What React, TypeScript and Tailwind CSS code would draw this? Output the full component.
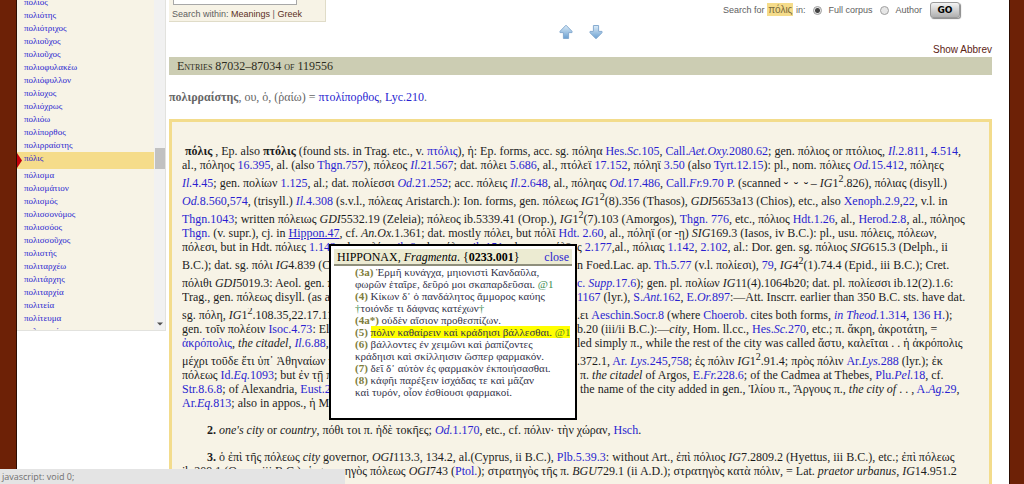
import React from "react";

const before = [
  "πόλιος", "πολιότης", "πολιότριχος", "πολιοῦχος", "πολιοῦχος", "πολιοφυλακέω",
  "πολιόφυλλον", "πολίοχος", "πολιόχρως", "πολιόω", "πολίπορθος", "πολιρραίστης",
];
const after = [
  "πόλισμα", "πολισμάτιον", "πολισμός", "πολισσονόμος", "πολισσόος", "πολισσοῦχος",
  "πολιστής", "πολιταρχέω", "πολιτάρχης", "πολιταρχία", "πολιτεία", "πολίτευμα", "πολιτευτέον",
];

/* Inline marks: [link] _italic_ #bold# ^superscript */
function rich(text: string): React.ReactNode[] {
  return text.split(/(\[[^\]]+\]|_[^_]+_|#[^#]+#|\^\d)/).map((part, i) => {
    if (/^\[/.test(part)) {
      const inner = part.slice(1, -1);
      return (
        <a key={i} href="#cite" className={inner === "Hippon.47" ? "text-[#2a1fd0] underline" : "text-[#2a1fd0]"}>
          {rich(inner)}
        </a>
      );
    }
    if (/^_./.test(part)) return <i key={i}>{part.slice(1, -1)}</i>;
    if (/^#./.test(part)) return <b key={i}>{part.slice(1, -1)}</b>;
    if (/^\^/.test(part)) return <sup key={i} className="text-[10px]">{part.slice(1)}</sup>;
    return part;
  });
}

type LineData = { t: string; rest?: string; tall?: boolean };

const lines: LineData[] = [
  { t: " #πόλις# , Ep. also #πτόλις# (found sts. in Trag. etc., v. [πτόλις]), ἡ: Ep. forms, acc. sg. πόληα [Hes._Sc._105], [Call._Aet.Oxy._2080.62]; gen. πόλιος or πτόλιος, [_Il._2.811], [4.514]," },
  { t: "al., πόληος [16.395], al. (also [Thgn.757]), πόλεος [_Il._21.567]; dat. πόλει [5.686], al., πτόλεϊ [17.152], πόληϊ [3.50] (also [Tyrt.12.15]): pl., nom. πόλιες [_Od._15.412], πόληες" },
  { t: "[_Il._4.45]; gen. πολίων [1.125], al.; dat. πολίεσσι [_Od._21.252]; acc. πόλεις [_Il._2.648], al., πόληας [_Od._17.486], [Call._Fr._9.70 P.] (scanned ⏑  ⏑  ⏑ – _IG_1^2.826), πόλιας (disyll.)", tall: true },
  { t: "[_Od._8.560],[574], (trisyll.) [_Il._4.308] (s.v.l., πόλεας Aristarch.): Ion. forms, gen. πόλεως _IG_1^2(8).356 (Thasos), _GDI_5653a13 (Chios), etc., also [Xenoph.2.9],[22], v.l. in", tall: true },
  { t: "[Thgn.1043]; written πόλειως _GDI_5532.19 (Zeleia); πόλεος ib.5339.41 (Orop.), _IG_1^2(7).103 (Amorgos), [Thgn. 776], etc., πόλιος [Hdt.1.26], al., [Herod.2.8], al., πόληος", tall: true },
  { t: "[Thgn.] (v. supr.), cj. in [Hippon.47], cf. _An.Ox._1.361; dat. mostly πόλει, but πόλῑ [Hdt. 2.60], al., πόληϊ (or -ῃ) _SIG_169.3 (Iasos, iv B.C.): pl., usu. πόλεις, πόλεων," },
  { t: "πόλεσι, but in Hdt. πόλιες [1.142], al., πολίων [ib.6], al., πόλισι [ib.151], al., acc. πόλῑ", rest: "ς [2.177],al., πόλιας [1.142], [2.102], al.: Dor. gen. sg. πόλιος _SIG_615.3 (Delph., ii" },
  { t: "B.C.); dat. sg. πόλι _IG_4.839 (Calauria); dat. pl. πολίεσι", rest: "n Foed.Lac. ap. [Th.5.77] (v.l. πολίεσι), [79], _IG_4^2(1).74.4 (Epid., iii B.C.); Cret.", tall: true },
  { t: "πόλιθι _GDI_5019.3: Aeol. gen. πόλιος", rest: "[c. _Supp._17.6]); gen. pl. πολίων _IG_11(4).1064b20; dat. pl. πολίεσσι ib.12(2).1.6:", tall: true },
  { t: "Trag., gen. πόλεως disyll. (as always in Com.)", rest: "[1167] (lyr.), [S._Ant._162], [E._Or._897]:—Att. Inscrr. earlier than 350 B.C. sts. have dat." },
  { t: "sg. πόλη, _IG_1^2.108.35,22.17.11, al.", rest: ".ει [Aeschin.Socr.8] (where [Choerob.] cites both forms, [_in Theod._1.314], [136 H.]);", tall: true },
  { t: "gen. τοῖν πολέοιν [Isoc.4.73]: Elean πόλερ", rest: "b.20 (iii/ii B.C.):—_city_, Hom. ll.cc., [Hes._Sc._270], etc.; π. ἄκρη, ἀκροτάτη, =" },
  { t: "[ἀκρόπολις], _the citadel_, [_Il._6.88], al.: at Athens", rest: "led simply π., while the rest of the city was called ἄστυ, καλεῖται . . ἡ ἀκρόπολις" },
  { t: "μέχρι τοῦδε ἔτι ὑπ᾽ Ἀθηναίων πόλις", rest: ".372.1, [Ar. _Lys._245],[758]; ἐς πόλιν _IG_1^2.91.4; πρὸς πόλιν [Ar._Lys._288] (lyr.); ἐκ", tall: true },
  { t: "πόλεως [Id._Eq._1093]; but ἐν τῇ πόλει", rest: " π. _the citadel_ of Argos, [E._Fr._228.6]; of the Cadmea at Thebes, [Plu._Pel._18], cf." },
  { t: "[Str.8.6.8]; of Alexandria, [Eust.239]", rest: " the name of the city added in gen., Ἰλίου π., Ἄργους π., _the city of_ . . , [A._Ag._29]," },
  { t: "[Ar._Eq._813]; also in appos., ἡ Μένδη πόλις" },
];

function Line({ t, rest, tall }: LineData) {
  return (
    <div className={tall ? "flex pt-1" : "flex"}>
      <span className={rest ? "w-[395px] shrink-0 overflow-hidden whitespace-pre" : "whitespace-pre"}>{rich(t)}</span>
      {rest && <span className="whitespace-pre">{rich(rest)}</span>}
    </div>
  );
}

const Num = ({ children }: { children: string }) => <b className="text-[#7d7d3c]">{children}</b>;

function Popup() {
  return (
    <div role="dialog" aria-label="Hipponax" className="absolute left-[329px] top-[244px] h-[176px] w-[248px] border-2 border-black bg-white p-[3px] text-[#33334a]">
      <div className="flex h-[17px] items-center justify-between border-b-2 border-[#8f8f7c] bg-[#ecebd2] px-[3px] text-[12px] text-black">
        <span className="whitespace-pre">HIPPONAX, <i>Fragmenta</i>. {"{"}<b>0233.001</b>{"}"}</span>
        <a href="#close" className="text-[#2a1fd0]">close</a>
      </div>
      <div className="whitespace-nowrap pl-[21px] text-[11px] leading-[12px]">
        <p><Num>(3a)</Num> Ἑρμῆ κυνάγχα, μηιονιστὶ Κανδαῦλα,</p>
        <p>φωρῶν ἑταῖρε, δεῦρό μοι σκαπαρδεῦσαι. <span className="text-[#3c8a50]">@1</span></p>
        <p><Num>(4)</Num> Κίκων δ᾽ ὁ πανδάλητος ἄμμορος καύης</p>
        <p><span className="text-[#3c8a50]">†</span>τοιόνδε τι δάφνας κατέχων<span className="text-[#3c8a50]">†</span></p>
        <p><Num>(4a*)</Num> οὐδὲν αἴσιον προθεσπίζων.</p>
        <p><Num>(5)</Num> <span className="bg-[#ffff00]">πόλιν καθαίρειν καὶ κράδηισι βάλλεσθαι. <span className="text-[#5c8a20]">@1</span></span></p>
        <p><Num>(6)</Num> βάλλοντες ἐν χειμῶνι καὶ ῥαπίζοντες</p>
        <p>κράδηισι καὶ σκίλληισιν ὥσπερ φαρμακόν.</p>
        <p><Num>(7)</Num> δεῖ δ᾽ αὐτὸν ἐς φαρμακὸν ἐκποιήσασθαι.</p>
        <p><Num>(8)</Num> κἀφῆι παρέξειν ἰσχάδας τε καὶ μᾶζαν</p>
        <p>καὶ τυρόν, οἷον ἐσθίουσι φαρμακοί.</p>
      </div>
    </div>
  );
}

function Arrow({ down }: { down?: boolean }) {
  return (
    <a href={down ? "#next" : "#previous"} aria-label={down ? "Next entries" : "Previous entries"}>
      <svg width="14" height="16" viewBox="0 0 14 16">
        <defs>
          <linearGradient id={down ? "gd" : "gu"} x1="0" y1="0" x2="0" y2="1">
            <stop offset="0" stopColor="#dcecf8" />
            <stop offset="1" stopColor="#6a9fd0" />
          </linearGradient>
        </defs>
        <path
          d={down ? "M7 14.8 L13 8.7 V7.4 H9.6 V1.5 H4.4 V7.4 H1 V8.7 Z" : "M7 1.2 L13 7.3 V8.6 H9.6 V14.5 H4.4 V8.6 H1 V7.3 Z"}
          fill={down ? "url(#gd)" : "url(#gu)"}
          stroke="#86abd0"
          strokeLinejoin="round"
        />
      </svg>
    </a>
  );
}

function Sidebar() {
  return (
    <nav aria-label="Headwords" className="flex h-[331px] w-[149px] shrink-0 overflow-hidden border-b border-r border-[#e2e2de] bg-[#f7f3e6] text-[9px] leading-[13px]">
      <div className="-mt-1 flex-1">
        <ul className="pl-[7px]">
          {before.map((w, i) => <li key={i}><a href="#w" className="text-[#2a1fd0]">{w}</a></li>)}
        </ul>
        <div className="flex h-[17px] bg-[#f5dc8a]">
          <svg width="7" height="17" viewBox="0 0 7 17" aria-hidden="true"><path d="M0 1 L5 8.5 L0 16 Z" fill="#c4000a" /></svg>
          <a href="#w" className="text-[#2a1fd0]">πόλις</a>
        </div>
        <ul className="pl-[7px]">
          {after.map((w, i) => <li key={i}><a href="#w" className="text-[#2a1fd0]">{w}</a></li>)}
        </ul>
      </div>
      <div className="flex w-[11px] flex-col items-center justify-between bg-[#f1f1f1] pb-1" aria-hidden="true">
        <div className="mt-[148px] h-[21px] w-[10px] bg-[#c1c1c1]" />
        <svg width="6" height="4" viewBox="0 0 6 4"><path d="M0 0.5 H6 L3 3.5 Z" fill="#505050" /></svg>
      </div>
    </nav>
  );
}

const radio = "h-[9px] w-[9px] appearance-none rounded-full border border-[#a0a0a0] bg-[#e6e6e6] checked:bg-[radial-gradient(circle,#444_0_2px,#e6e6e6_3px)]";

export default function App() {
  return (
    <div className="relative flex h-screen overflow-hidden bg-white font-['Liberation_Serif','Times_New_Roman',serif]">
      <div className="w-[17px] shrink-0 border-r border-[#2c0d02] bg-[#6d2106]" />
      <Sidebar />
      <main className="min-w-0 flex-1 pl-[3px] pr-[17px]">
        <div className="flex h-[22px] items-start justify-between font-['Liberation_Sans',Arial,sans-serif] text-[9px] text-[#606060]">
          <div className="h-[22px] w-[157px] border-b border-r border-[#e0dcc8] bg-[#f7f3e6] pl-[3px]">
            <input aria-label="Search" className="ml-px block h-[5px] w-[124px] border border-t-0 border-[#a8a8a8] bg-white" />
            <p className="whitespace-nowrap pt-[2px] leading-[14px]">
              Search within: <a href="#meanings" className="text-[#5c3024]">Meanings</a> | <a href="#greek" className="text-[#5c3024]">Greek</a>
            </p>
          </div>
          <form className="flex items-center pr-8 pt-[2px]" onSubmit={(e) => e.preventDefault()}>
            <span className="whitespace-pre">Search for <span className="bg-[#f5dc8a] px-px py-px text-[10px] text-[#7a6a3c]">πόλις</span> in:</span>
            <input id="full" type="radio" name="scope" defaultChecked className={`ml-2 ${radio}`} />
            <label htmlFor="full" className="ml-[6px] pt-[2px]">Full corpus</label>
            <input id="author" type="radio" name="scope" className={`ml-2 ${radio}`} />
            <label htmlFor="author" className="ml-[6px] pt-[2px]">Author</label>
            <button className="ml-2 h-4 w-[30px] rounded-[3px] border border-[#9a9a9a] bg-linear-to-b from-[#f4f4f4] to-[#b0b0b0] font-['DejaVu_Sans',sans-serif] text-[9px] font-bold leading-none text-black shadow-[1px_1px_1px_#888]">GO</button>
          </form>
        </div>
        <div className="flex justify-center gap-4 pt-[2px]">
          <Arrow />
          <Arrow down />
        </div>
        <div className="mt-[3px] flex h-[14px] justify-end font-['Liberation_Sans',Arial,sans-serif] text-[10px] leading-[14px]">
          <a href="#abbrev" className="text-[#5c2415]">Show Abbrev</a>
        </div>
        <h1 className="h-[18px] bg-[#cccdb3] pl-2 text-[12px] leading-[18px] text-[#2c2c20] [font-variant-caps:small-caps]">Entries 87032–87034 of 119556</h1>
        <p className="pt-[15px] text-[12px] leading-[14px] text-[#666]">{rich("#πολιρραίστης#, ου, ὁ, (ῥαίω) = [πτολίπορθος], [Lyc.210].")}</p>
        <article className="mt-[15px] border-[3px] border-[#f3dc8c] bg-[#f7f3e6] pb-6 pl-[10px] pt-[22px] text-[12px] leading-[14px] text-[#1c1c1c] [&_sup]:leading-none">
          {lines.map((l, i) => <Line key={i} {...l} />)}
          <p className="whitespace-nowrap pl-[25px] pt-[13px]">{rich("#2.# _one's city_ or _country_, πόθι τοι π. ἠδὲ τοκῆες; [_Od._1.170], etc., cf. πόλιν· τὴν χώραν, [Hsch].")}</p>
          <p className="whitespace-nowrap pl-[25px] pt-[13px]">{rich("#3.# ὁ ἐπὶ τῆς πόλεως _city_ governor, _OGI_113.3, 134.2, al.(Cyprus, ii B.C.), [Plb.5.39.3]: without Art., ἐπὶ πόλιος _IG_7.2809.2 (Hyettus, iii B.C.), etc.; ἐπὶ πόλεως")}</p>
          <p className="whitespace-nowrap">{rich("ib.209.1 (Orop., iii B.C.); ὁ στρατηγὸς πόλεως _OGI_743 ([Ptol.]); στρατηγὸς τῆς π. _BGU_729.1 (ii A.D.); στρατηγὸς κατὰ πόλιν, = Lat. _praetor urbanus_, _IG_14.951.2")}</p>
        </article>
      </main>
      <div className="w-[15px] shrink-0 border-l border-[#2c0d02] bg-[#6d2106]" />
      <Popup />
      <div className="absolute bottom-0 left-0 h-[15px] w-[345px] bg-[#e4e4e4] pl-[2px] font-['Open_Sans',sans-serif] text-[9px] leading-[16px] text-[#707070]">javascript: void 0;</div>
    </div>
  );
}
